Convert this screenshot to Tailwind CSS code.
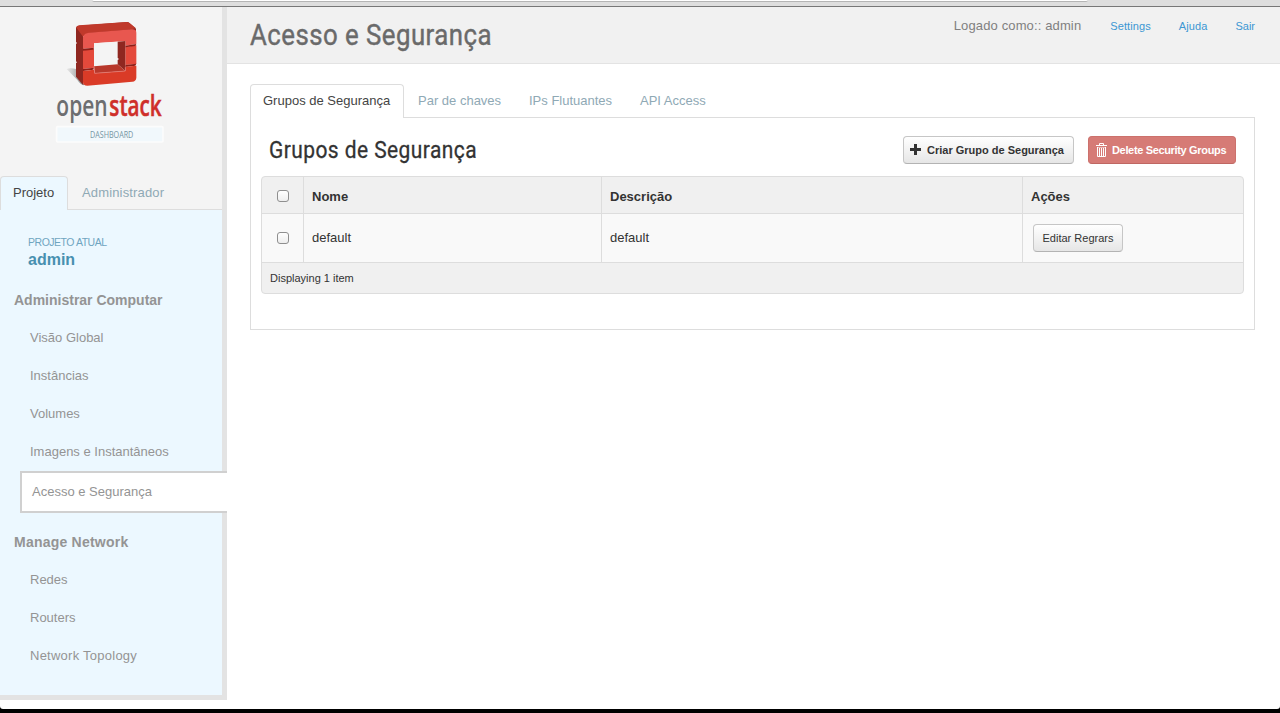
<!DOCTYPE html>
<html lang="pt">
<head>
<meta charset="utf-8">
<title>Acesso e Segurança</title>
<script src="https://cdn.jsdelivr.net/npm/@tailwindcss/browser@4"></script>
</head>
<body class="bg-black">
<div class="flex h-[713px] w-[1280px] flex-col overflow-hidden bg-black font-['Liberation_Sans',Arial,sans-serif] text-[13px] leading-[18px] text-[#333]">
  <div class="flex h-[7px] shrink-0 border-b border-[#777] bg-[#dedede] pl-[92px]">
    <div class="h-[2px] w-[996px] rounded-b-[3px] border-b border-[#b5b5b5] bg-white"></div>
  </div>
  <div class="flex h-[702px] shrink-0 rounded-b-[3px] bg-white">
    <aside class="flex h-[693px] w-[227px] shrink-0 flex-col border-b-[5px] border-[#e3e3e3] bg-[linear-gradient(to_right,transparent_222px,#e3e3e3_222px)]">
      <div class="h-[169px] w-[222px] shrink-0 bg-[#f4f4f4] pl-10">
        <svg width="182" height="143" viewBox="0 21 546 429">
          <defs>
            <linearGradient id="sh" x1="0" x2="1"><stop offset="0" stop-color="#999" stop-opacity=".15"/><stop offset="1" stop-color="#555" stop-opacity=".8"/></linearGradient>
          </defs>
          <path d="M80 207 Q92 202 108 207 L132 256 Q122 255 112 240Z" fill="url(#sh)"/>
          <path d="M108 84 Q109 79 116 77 L264 66 L288 86 L288 100 L130 105 L130 256 L108 230 L108 190 L111 187 L108 184 L108 132 L111 129 L108 126Z" fill="#8f2720"/>
          <path d="M108 82 Q110 77 118 76 L260 66 Q265 66 269 69 L287 84 L276 88 L146 99 Q134 101 129 110Z" fill="#c0392b"/>
          <path d="M129 112 Q132 99 147 98 L276 88 Q289 88 289 98 L289 132 L256 137 L256 123 L162 130 L162 143 L129 146Z" fill="#e8574f"/>
          <path d="M129 151 L162 147 L162 203 L129 207Z M256 141 L289 136 L289 192 L256 195Z" fill="#e4493b"/>
          <path d="M129 146 L162 143 L160 149 L129 152Z M256 137 L289 132 L286 138 L256 142Z M129 207 L162 203 L160 209 L129 213Z M256 195 L289 191 L286 197 L256 201Z" fill="#8f1d16"/>
          <path d="M129 213 L162 209 L164 220 L256 213 L256 200 L289 197 L289 233 Q288 244 277 245 L142 257 Q129 257 129 245Z" fill="#da3b27"/>
          <path d="M162 130 L233 125 L233 193 L162 199Z" fill="#f4f4f4"/>
          <path d="M233 125 L256 123 L256 213 L233 193 L233 180 L237 177 L233 174Z" fill="#8f2720"/>
          <path d="M162 199 L233 193 L256 213 L164 220Z" fill="#b8382b"/>
          <path d="M162 199 L164 220 L256 213 L256 202" fill="none" stroke="#e88078" stroke-width="2"/>
          <text x="49" y="349" font-family="Open Sans" font-weight="600" font-size="87" fill="#6d6e70" textLength="154" lengthAdjust="spacingAndGlyphs">open</text>
          <text x="208" y="349" font-family="Open Sans" font-weight="600" font-size="87" fill="#cf2f2a" stroke="#cf2f2a" stroke-width="1.5" textLength="157" lengthAdjust="spacingAndGlyphs">stack</text>
          <rect x="50" y="380" width="319" height="46" rx="3" fill="#f1f8fc" stroke="#fcfcfc" stroke-width="5"/>
          <text x="150" y="413" font-family="Open Sans" font-size="28" fill="#7595a3" textLength="130" lengthAdjust="spacingAndGlyphs">DASHBOARD</text>
        </svg>
      </div>
      <div class="flex h-[34px] w-[222px] shrink-0 bg-[#f4f4f4]">
        <div class="h-[34px] w-[68px] rounded-t-[4px] border border-b-0 border-[#ddd] bg-[#ecf8ff] pt-[7px] pl-3 text-[#444]"><span>Projeto</span></div>
        <div class="flex-1 border-b border-[#ddd] pt-2 pl-[14px] text-[#8fa9b5]"><span class="tracking-[0.15px]">Administrador</span></div>
      </div>
      <nav class="flex h-[485px] w-[227px] flex-col bg-[linear-gradient(to_right,#ecf8ff_222px,#e3e3e3_222px)] text-[#949494]">
        <p class="mt-[25px] ml-7 text-[10.5px] leading-[14px] tracking-[-0.48px] text-[#6fa5bf]">PROJETO ATUAL</p>
        <p class="mt-px ml-7 text-[16px] leading-5 font-bold text-[#4790b0]">admin</p>
        <h4 class="mt-5 ml-[14px] text-[14px] leading-5 font-bold">Administrar Computar</h4>
        <ul class="mt-[9px] ml-[30px] leading-[38px]">
          <li>Visão Global</li>
          <li>Instâncias</li>
          <li>Volumes</li>
          <li>Imagens e Instantâneos</li>
        </ul>
        <div class="ml-5 h-[42px] shrink-0 border-2 border-r-0 border-[#d0d0d0] bg-white pl-[10px] leading-[38px]">Acesso e Segurança</div>
        <h4 class="mt-[19px] ml-[14px] text-[14px] leading-5 font-bold tracking-[0.23px]">Manage Network</h4>
        <ul class="mt-[9px] ml-[30px] leading-[38px]">
          <li>Redes</li>
          <li>Routers</li>
          <li class="tracking-[0.25px]">Network Topology</li>
        </ul>
      </nav>
    </aside>
    <main class="flex flex-1 flex-col">
      <header class="flex h-[57px] shrink-0 justify-between border-b border-[#e3e3e3] bg-[#f1f1f1] pl-[23px]">
        <svg class="h-[56px] w-[300px] overflow-visible"><text x="0" y="38" font-family="Roboto" font-size="29" fill="#6a6a6a" stroke="#6a6a6a" stroke-width=".4" textLength="242" lengthAdjust="spacingAndGlyphs" letter-spacing=".5">Acesso e Segurança</text></svg>
        <div class="flex pt-[10px] pr-[25px] text-[11px] text-[#3c97d3]">
          <span class="mr-[29px] text-[13px] tracking-[0.13px] text-[#808080]">Logado como:: admin</span>
          <a class="mr-7 tracking-[0.1px]">Settings</a><a class="mr-7 tracking-[0.1px]">Ajuda</a><a>Sair</a>
        </div>
      </header>
      <div class="mt-5 ml-[23px] flex h-[34px] w-[1005px] shrink-0 text-[#8fa9b5]">
        <div class="w-[154px] rounded-t-[4px] border border-b-0 border-[#ddd] pt-[7px] pl-3 text-[#444]">Grupos de Segurança</div>
        <div class="flex flex-1 border-b border-[#ddd] pt-2 pl-[14px]"><span class="w-[111px]">Par de chaves</span><span class="w-[111px]">IPs Flutuantes</span><span>API Access</span></div>
      </div>
      <section class="ml-[23px] h-[212px] w-[1005px] shrink-0 border border-t-0 border-[#ddd] px-[10px]">
        <div class="flex h-[58px] items-start pr-2">
          <svg class="ml-2 h-[58px] w-[260px] overflow-visible"><text x="0" y="40" font-family="Roboto" font-size="24" fill="#333" stroke="#333" stroke-width=".3" textLength="208" lengthAdjust="spacingAndGlyphs" letter-spacing=".5">Grupos de Segurança</text></svg>
          <button class="mt-[18px] ml-auto flex h-7 w-[171px] items-center rounded-[4px] border border-[#c6c6c6] border-b-[#b3b3b3] bg-linear-to-b from-white to-[#e6e6e6] pl-[6px] text-[11px] font-bold text-[#333]">
            <svg class="mr-[5px] -mt-px" width="12" height="12" viewBox="0 0 12 12"><path d="M4 0h3v4h4v3h-4v4h-3v-4h-4v-3h4z" fill="#333"/></svg>
            <span>Criar Grupo de Segurança</span>
          </button>
          <button class="mt-[18px] ml-[14px] flex h-7 w-[148px] items-center rounded-[4px] border border-[#cc716c] border-b-[#bf6762] bg-[#d67b76] pl-[7px] text-[11px] font-bold text-white">
            <svg class="mr-1 -mt-px" width="12" height="14" viewBox="0 0 12 14" fill="none" stroke="#fff"><path d="M3.5 2V.5h4V2M0 2.5h11M1.5 4v9.5h8V4M3.5 5v8M5.5 5v8M7.5 5v8"/><path d="M1 4.5h9" stroke-opacity=".5"/></svg>
            <span class="tracking-[-0.34px]">Delete Security Groups</span>
          </button>
        </div>
        <div class="w-[983px] overflow-hidden rounded-[4px] border border-[#ddd] bg-[#f0f0f0]">
          <div class="grid h-9 grid-cols-[41px_298px_421px_1fr] font-bold leading-[39px]">
            <div class="flex h-9 items-center justify-center pt-[2px]"><i class="block h-3 w-3 rounded-[3px] border border-[#8f8f8f] bg-linear-to-b from-white to-[#eee]"></i></div>
            <div class="h-9 border-l border-[#ddd] pl-2">Nome</div>
            <div class="h-9 border-l border-[#ddd] pl-2">Descrição</div>
            <div class="h-9 border-l border-[#ddd] pl-2">Ações</div>
          </div>
          <div class="grid h-[50px] grid-cols-[41px_298px_421px_1fr] border-y border-[#ddd] bg-[#f9f9f9] leading-[47px]">
            <div class="flex items-center justify-center"><i class="block h-3 w-3 rounded-[3px] border border-[#8f8f8f] bg-linear-to-b from-white to-[#eee]"></i></div>
            <div class="border-l border-[#ddd] pl-2">default</div>
            <div class="border-l border-[#ddd] pl-2">default</div>
            <div class="border-l border-[#ddd] pt-[10px] pl-[10px]"><button class="flex h-7 w-[90px] items-center justify-center rounded-[4px] border border-[#c6c6c6] border-b-[#b3b3b3] bg-linear-to-b from-white to-[#e6e6e6] text-[11px] leading-4">Editar Regrars</button></div>
          </div>
          <div class="h-[30px] pl-2 text-[11px] leading-[31px]">Displaying 1 item</div>
        </div>
      </section>
    </main>
  </div>
</div>
</body>
</html>
